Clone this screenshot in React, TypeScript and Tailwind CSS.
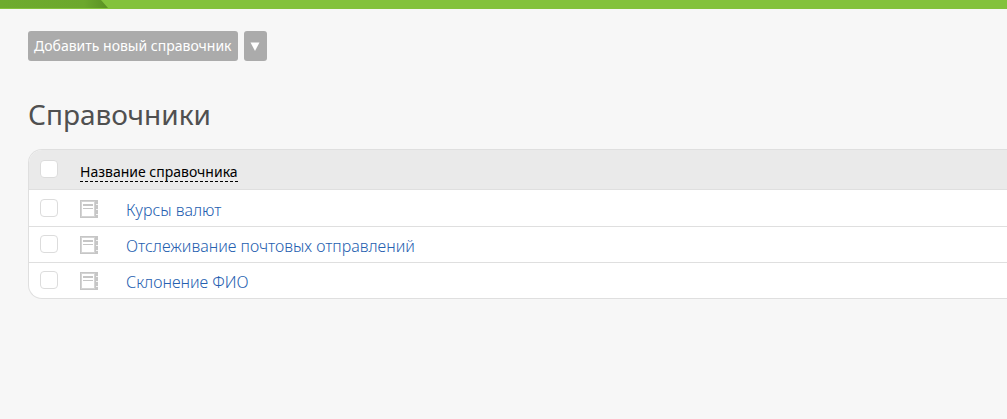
const directories = [
  { id: "rates", name: "Курсы валют" },
  { id: "tracking", name: "Отслеживание почтовых отправлений" },
  { id: "names", name: "Склонение ФИО" },
];

function NotebookIcon() {
  return (
    <svg width="18" height="18" viewBox="0 0 18 18" shapeRendering="crispEdges" aria-hidden="true" className="block">
      <rect width="18" height="18" fill="#c6c6c6" />
      <rect x="1" y="1" width="14" height="16" fill="#d4d4d4" />
      <rect x="2" y="2" width="12" height="14" fill="#fff" />
      <path d="M3 4h10v2H3z M3 8h10v1H3z" fill="#c6c6c6" />
      <path d="M16 4h2v1h-2z M16 9h2v1h-2z M16 14h2v1h-2z" fill="#f4f4f4" />
    </svg>
  );
}

function CheckBox({ label }: { label: string }) {
  return (
    <input
      type="checkbox"
      aria-label={label}
      className="block size-[18px] appearance-none rounded border border-[#dcdcdc] bg-white checked:bg-[#83c13c]"
    />
  );
}

function TopBar() {
  return (
    <div className="h-[9px] bg-[#83c23c]">
      <svg width="108" height="8" viewBox="0 0 108 8" aria-hidden="true" className="block">
        <defs>
          <linearGradient id="tab" x1="0" x2="1" y1="0" y2="0">
            <stop offset="0" stopColor="#6eab2e" />
            <stop offset="0.78" stopColor="#6ca82d" />
            <stop offset="1" stopColor="#5a9123" />
          </linearGradient>
        </defs>
        <path d="M0 0H101L108 8H0z" fill="url(#tab)" />
      </svg>
    </div>
  );
}

export default function App() {
  return (
    <div className="min-h-screen overflow-hidden bg-[#f7f7f7] font-['Noto_Sans','Open_Sans',sans-serif]">
      <TopBar />
      <main className="pt-[22px] pl-7">
        <div className="flex gap-1.5">
          <button type="button" className="h-[30px] rounded-[3px] bg-[#ababab] px-1.5 text-[14px] leading-[30px] whitespace-nowrap text-white">
            Добавить новый справочник
          </button>
          <button type="button" aria-label="Другие действия" className="flex h-[30px] w-[23px] items-center justify-center rounded-[3px] bg-[#ababab]">
            <svg width="10" height="9" viewBox="0 0 10 9" aria-hidden="true">
              <path d="M0.5 0.5h9L5 9z" fill="#fff" />
            </svg>
          </button>
        </div>
        <h1 className="mt-[31px] text-[28px] leading-11 text-[#505050]">Справочники</h1>
        <div className="mt-[13px] overflow-hidden rounded-l-[14px] border border-r-0 border-[#dfdfdf] bg-white">
          <table className="w-full border-separate border-spacing-0">
            <thead>
              <tr className="h-10 bg-[#eaeaea]">
                <th className="w-[51px] border-b border-[#dfdfdf] pb-0.5 pl-[11px]">
                  <CheckBox label="Выбрать все" />
                </th>
                <th colSpan={2} className="border-b border-[#dfdfdf] pt-1 text-left text-[14px] font-normal text-black">
                  <button type="button" className="block border-b border-dashed border-black leading-[19px]">Название справочника</button>
                </th>
              </tr>
            </thead>
            <tbody className="[&>tr:first-child>td]:border-t [&>tr:first-child>td]:border-t-white [&>tr:last-child>td]:border-b-0">
              {directories.map((item) => (
                <tr key={item.id} className="h-9 align-top first:h-[37px] last:h-[35px]">
                  <td className="border-b border-b-[#dfdfdf] pt-2 pl-[11px]">
                    <CheckBox label={item.name} />
                  </td>
                  <td className="w-[46px] border-b border-b-[#dfdfdf] pt-[9px]">
                    <NotebookIcon />
                  </td>
                  <td className="border-b border-b-[#dfdfdf] pt-[7px] text-[16px] leading-6 font-light text-[#2560b0]">
                    <a href="#">{item.name}</a>
                  </td>
                </tr>
              ))}
            </tbody>
          </table>
        </div>
      </main>
    </div>
  );
}
